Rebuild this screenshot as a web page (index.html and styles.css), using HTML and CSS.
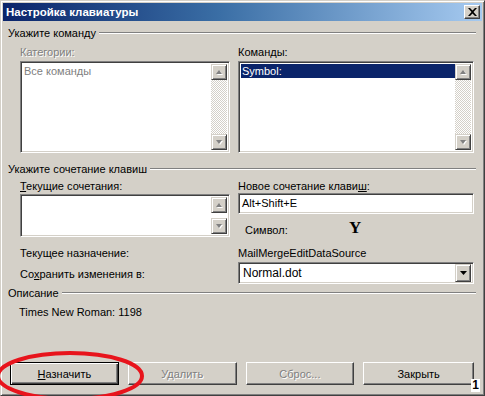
FILE: index.html
```html
<!DOCTYPE html>
<html lang="ru">
<head>
<meta charset="utf-8">
<title>Настройка клавиатуры</title>
<link rel="stylesheet" href="styles.css">
</head>
<body>
<div class="window">
  <div class="titlebar">
    <span class="title">Настройка клавиатуры</span>
    <span class="close-btn"><svg width="9" height="8" viewBox="0 0 9 8"><path d="M0 0h2l2.5 2.5L7 0h2L5.5 4 9 8H7L4.5 5.5 2 8H0l3.5-4z" fill="#000"/></svg></span>
  </div>
  <div class="content">
    <div class="group-head"><span>Укажите команду</span><span class="rule"></span></div>
    <div class="cols cols-1">
      <div class="col">
        <div class="label disabled">Категории:</div>
        <div class="listbox lb-tall">
          <div class="items"><div class="item gray">Все команды</div></div>
          <div class="scrollbar"><span class="sb-btn up"></span><span class="sb-track"></span><span class="sb-btn down"></span></div>
        </div>
      </div>
      <div class="col">
        <div class="label">Коман<u>д</u>ы:</div>
        <div class="listbox lb-tall">
          <div class="items"><div class="item selected">Symbol:</div></div>
          <div class="scrollbar"><span class="sb-btn up"></span><span class="sb-track"></span><span class="sb-btn down"></span></div>
        </div>
      </div>
    </div>

    <div class="group-head gh-2"><span>Укажите сочетание клавиш</span><span class="rule"></span></div>
    <div class="cols cols-2">
      <div class="col">
        <div class="label"><u>Т</u>екущие сочетания:</div>
        <div class="listbox lb-short">
          <div class="items"></div>
          <div class="scrollbar"><span class="sb-btn up"></span><span class="sb-btn down"></span></div>
        </div>
      </div>
      <div class="col">
        <div class="label">Новое сочетание клави<u>ш</u>:</div>
        <div class="textbox">Alt+Shift+E</div>
        <div class="symbol-row"><span class="sym-label">Символ:</span><span class="sym-glyph">Y</span></div>
      </div>
    </div>
    <div class="cols row-assign">
      <div class="label">Текущее назначение:</div>
      <div class="label">MailMergeEditDataSource</div>
    </div>
    <div class="cols row-save">
      <div class="label">Со<u>х</u>ранить изменения в:</div>
      <div class="combo"><span class="combo-text">Normal.dot</span><span class="combo-btn"><svg width="7" height="4" viewBox="0 0 7 4"><path d="M0 0h7L3.5 4z" fill="#000"/></svg></span></div>
    </div>

    <div class="group-head gh-3"><span>Описание</span><span class="rule"></span></div>
    <div class="desc">Times New Roman: 1198</div>

    <div class="buttons">
      <span class="btn default"><u>Н</u>азначить</span>
      <span class="btn disabled">Удалить</span>
      <span class="btn disabled">Сброс...</span>
      <span class="btn">Закрыть</span>
    </div>
  </div>
  <svg class="ellipse" width="160" height="60" viewBox="0 0 160 60"><ellipse cx="72" cy="28" rx="72" ry="23" fill="none" stroke="#e8141c" stroke-width="4"/></svg>
  <span class="badge">1</span>
</div>
</body>
</html>
```

FILE: styles.css
```css
* { box-sizing: border-box; }
html, body { margin: 0; padding: 0; }
body {
  width: 485px;
  height: 396px;
  overflow: hidden;
  background: #d4d0c8;
  font-family: "Liberation Sans", Arial, sans-serif;
  font-size: 11px;
  color: #000;
}
.window {
  position: relative;
  width: 485px;
  height: 396px;
  background: #d4d0c8;
  border: 1px solid;
  border-color: #d4d0c8 #404040 #404040 #d4d0c8;
  box-shadow: inset 1px 1px 0 #fff, inset -1px -1px 0 #808080;
  padding: 2px;
  display: flex;
  flex-direction: column;
}
.titlebar {
  height: 18px;
  background: linear-gradient(to right, #0a246a 0%, #3a6ea5 45%, #a6caf0 100%);
  display: flex;
  align-items: center;
  justify-content: space-between;
  padding: 0 2px 0 3px;
}
.title {
  color: #fff;
  font-weight: bold;
  font-size: 11.5px;
}
.close-btn {
  width: 16px;
  height: 14px;
  background: #d4d0c8;
  border: 1px solid;
  border-color: #fff #404040 #404040 #fff;
  box-shadow: inset -1px -1px 0 #808080;
  display: flex;
  align-items: center;
  justify-content: center;
}
.content {
  flex: 1;
  display: flex;
  flex-direction: column;
  padding: 0 8px 0 5px;
}
.group-head {
  display: flex;
  align-items: center;
  height: 14px;
  margin-top: 5px;
}
.group-head .rule {
  flex: 1;
  height: 2px;
  border-top: 1px solid #808080;
  border-bottom: 1px solid #fff;
  margin-left: 3px;
  margin-right: -2px;
}
.gh-2 { margin-top: 9px; }
.gh-3 { margin-top: 2px; }
.cols {
  display: grid;
  grid-template-columns: 210px 236px;
  column-gap: 8px;
  padding-left: 12px;
}
.cols-1 { margin-top: 6px; }
.cols-2 { margin-top: 4px; }
.col { display: flex; flex-direction: column; }
.label {
  height: 13px;
  line-height: 13px;
  white-space: nowrap;
}
.disabled { color: #808080; text-shadow: 1px 1px 0 #fff; }
.listbox {
  display: flex;
  background: #fff;
  border: 1px solid;
  border-color: #808080 #fff #fff #808080;
  box-shadow: inset 1px 1px 0 #404040, inset -1px -1px 0 #d4d0c8;
  padding: 2px;
}
.lb-tall { height: 92px; margin-top: 2px; }
.lb-short { height: 43px; margin-top: 1px; }
.items { flex: 1; }
.item {
  height: 14px;
  line-height: 14px;
  padding-left: 1px;
}
.item.gray { color: #808080; }
.item.selected { background: #0a246a; color: #fff; }
.scrollbar {
  width: 16px;
  display: flex;
  flex-direction: column;
  justify-content: space-between;
}
.sb-track {
  flex: 1;
  background-color: #fff;
  background-image: conic-gradient(#d4d0c8 25%, #fff 25% 50%, #d4d0c8 50% 75%, #fff 75%);
  background-size: 2px 2px;
}
.sb-btn {
  height: 16px;
  background: #d4d0c8;
  border: 1px solid;
  border-color: #d4d0c8 #404040 #404040 #d4d0c8;
  box-shadow: inset 1px 1px 0 #fff, inset -1px -1px 0 #808080;
  display: flex;
  align-items: center;
  justify-content: center;
}
.sb-btn::before {
  content: "";
  width: 0;
  height: 0;
  border-left: 3.5px solid transparent;
  border-right: 3.5px solid transparent;
  filter: drop-shadow(1px 1px 0 #fff);
}
.sb-btn.up::before { border-bottom: 4px solid #808080; }
.sb-btn.down::before { border-top: 4px solid #808080; }
.textbox {
  height: 21px;
  margin-top: 0;
  background: #fff;
  border: 1px solid;
  border-color: #808080 #fff #fff #808080;
  box-shadow: inset 1px 1px 0 #404040, inset -1px -1px 0 #d4d0c8;
  padding: 0 3px;
  line-height: 19px;
}
.symbol-row {
  display: flex;
  align-items: center;
  height: 18px;
  margin-top: 7px;
  padding-left: 7px;
}
.sym-label { width: 104px; }
.sym-glyph {
  font-family: "Liberation Serif", "Times New Roman", serif;
  font-size: 17px;
  font-weight: bold;
  position: relative;
  top: -2px;
}
.row-assign { margin-top: 8px; }
.row-save { margin-top: 2px; align-items: center; }
.row-save .label { margin-top: 2px; }
.combo {
  height: 22px;
  display: flex;
  align-items: center;
  background: #fff;
  border: 1px solid;
  border-color: #808080 #fff #fff #808080;
  box-shadow: inset 1px 1px 0 #404040, inset -1px -1px 0 #d4d0c8;
  padding: 2px;
}
.combo-text { flex: 1; padding-left: 2px; font-size: 12px; }
.combo-btn {
  width: 16px;
  height: 18px;
  background: #d4d0c8;
  border: 1px solid;
  border-color: #d4d0c8 #404040 #404040 #d4d0c8;
  box-shadow: inset 1px 1px 0 #fff, inset -1px -1px 0 #808080;
  display: flex;
  align-items: center;
  justify-content: center;
}
.desc {
  margin-top: 6px;
  padding-left: 11px;
  height: 13px;
  line-height: 13px;
}
.buttons {
  margin-top: auto;
  margin-bottom: 8px;
  display: flex;
  gap: 9px;
  padding-left: 2px;
}
.btn {
  width: 109px;
  height: 23px;
  display: flex;
  align-items: center;
  justify-content: center;
  background: #d4d0c8;
  border: 1px solid;
  border-color: #fff #404040 #404040 #fff;
  box-shadow: inset -1px -1px 0 #808080;
}
.btn:last-child { width: 111px; }
.btn.default {
  border: 1px solid #000;
  box-shadow: inset 1px 1px 0 #fff, inset -1px -1px 0 #404040, inset -2px -2px 0 #808080;
}
.ellipse {
  position: absolute;
  left: -3px;
  top: 347px;
}
.badge {
  position: absolute;
  right: 4px;
  top: 378px;
  font-weight: bold;
  font-size: 12px;
  background: #fff;
  line-height: 13px;
  padding: 0 1px;
}
```
